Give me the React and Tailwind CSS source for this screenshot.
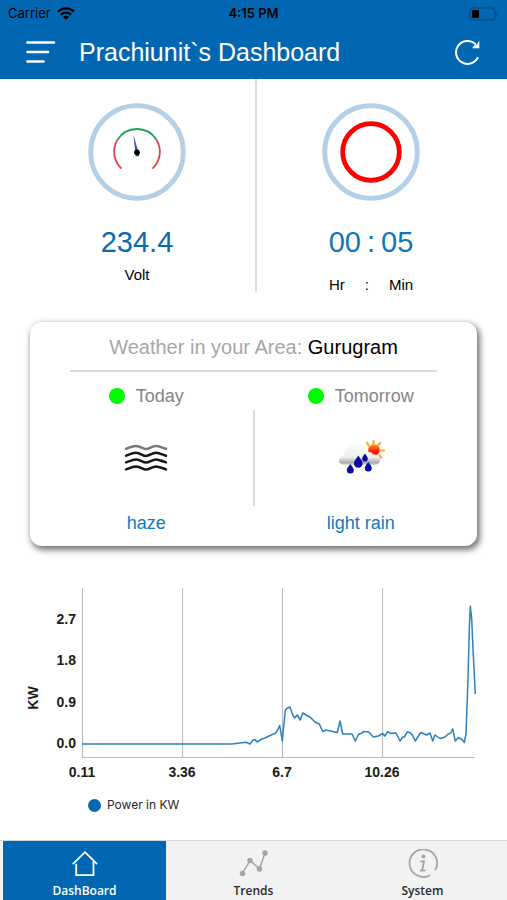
import { useState } from 'react';
import clsx from 'clsx';

// [x, y] inside the chart's own viewBox
const POWER_POINTS = [
  [82, 165], [232, 165], [240, 164], [246, 163.3], [250, 165], [253, 161], [255, 160.5], [257, 163], [262, 160], [265, 159],
  [270, 156.5], [275, 154.5], [277.7, 151], [279.7, 146.5], [282.3, 162], [285.3, 131], [287.3, 129], [290, 128],
  [292.7, 136], [294.7, 139], [297.3, 136], [300.3, 141], [302.7, 134], [306.7, 136.5], [310, 138], [315, 143],
  [319.3, 145], [322.7, 152.5], [326, 151], [337.3, 153.5], [340, 142], [342.7, 155], [352, 155], [355.3, 162],
  [358.3, 155.5], [361.7, 154], [364, 152.5], [368.7, 153], [373.3, 158], [378.3, 157], [382.7, 154.5],
  [384.7, 157], [387.7, 152.7], [390.7, 154.5], [396, 154], [400, 162], [402.7, 158], [404.3, 158], [407.3, 153],
  [410, 153.5], [412.7, 156.5], [415.3, 162], [420.7, 153.5], [426.7, 156], [430, 154], [432.7, 162], [435, 156],
  [440, 159.5], [445, 158], [448.3, 155], [450.7, 154], [452.7, 150], [455.3, 162], [458.3, 158.5], [462, 160.5],
  [464.3, 163.5], [466, 155], [468, 100], [469.3, 50], [470.3, 27], [471.7, 40], [473, 70], [474, 90], [475.3, 115],
];

const X_TICKS = [
  { x: 82, label: '0.11' },
  { x: 182, label: '3.36' },
  { x: 282, label: '6.7' },
  { x: 382, label: '10.26' },
];

const Y_TICKS = [
  { y: 40, label: '2.7' },
  { y: 81, label: '1.8' },
  { y: 123, label: '0.9' },
  { y: 164, label: '0.0' },
];

const WifiIcon = () => (
  <svg viewBox="0 0 18 13" className="w-[18px] h-[13px]" aria-hidden="true">
    <path d="M1 4.6a11.4 11.4 0 0 1 16 0" fill="none" stroke="#000" strokeWidth="2.3" />
    <path d="M3.9 7.7a7.3 7.3 0 0 1 10.2 0" fill="none" stroke="#000" strokeWidth="2.2" />
    <path d="M9 12.8 6 9.9a4.2 4.2 0 0 1 6 0z" />
  </svg>
);

const BatteryIcon = () => (
  <svg viewBox="0 0 30 14" className="w-[30px] h-[14px]" aria-hidden="true">
    <rect x="1" y="1" width="25" height="12" rx="3" fill="none" stroke="#0b4676" strokeWidth="1.2" />
    <rect x="3" y="3" width="7" height="8" rx="1" />
    <path d="M27.5 4.6c2 .8 2 4 0 4.8z" fill="#0b4676" />
  </svg>
);

const MenuIcon = () => (
  <svg viewBox="0 0 30 24" className="w-[30px] h-6" fill="none" stroke="#fff" strokeWidth="2.6" strokeLinecap="round" aria-hidden="true">
    <path d="M1.5 1.5h26.5M1.5 11h20.5M1.5 20.500h16" />
  </svg>
);

const RefreshIcon = () => (
  <svg viewBox="0 0 26 26" className="w-[26px] h-[26px]" fill="none" stroke="#fff" strokeWidth="2" aria-hidden="true">
    <path d="M23 17.200A11.500 11.500 0 1 1 20.800 4.400" />
    <path d="M24 1.500v6.500h-6.300l1.500-2.500 3 -.5z" fill="#fff" strokeWidth="0.6" />
  </svg>
);

const VoltGauge = () => (
  <svg viewBox="0 0 98 98" className="w-[98px] h-[98px]" fill="none" aria-hidden="true">
    <circle cx="49" cy="49" r="46.3" stroke="#b3d0e6" strokeWidth="4.8" />
    <path d="M33.5 65.6A23 23 0 0 1 29.5 36.8" stroke="#e0444a" strokeWidth="1.8" />
    <path d="M29.5 36.8A23 23 0 0 1 68.5 36.8" stroke="#17a554" strokeWidth="1.8" />
    <path d="M68.5 36.8A23 23 0 0 1 64.5 65.6" stroke="#e0444a" strokeWidth="1.8" />
    <path d="M45.4 31.5 51.5 53 47.8 53.5z" fill="#2f55b5" />
    <circle cx="49" cy="49.3" r="2.9" fill="#000" />
  </svg>
);

const TimerRing = () => (
  <svg viewBox="0 0 98 98" className="w-[98px] h-[98px]" fill="none" aria-hidden="true">
    <circle cx="49" cy="49" r="46.3" stroke="#b3d0e6" strokeWidth="4.8" />
    <circle cx="49" cy="49" r="28.3" stroke="#fe0000" strokeWidth="4.8" />
  </svg>
);

const HazeIcon = () => (
  <svg viewBox="0 0 44 28" className="w-11 h-7" fill="none" stroke="#161616" strokeWidth="2.5" strokeLinecap="round" aria-hidden="true">
    <path d="M2 4.8C6 3.2 9 2 12 2c4.500 0 6.500 3 10 3s6-3 10-3c3.500 0 6 1.600 10 2.800" stroke="#777" />
    <path d="M2 11.800C6 10.200 9 8.800 12 8.800c4.500 0 6.500 3.200 10 3.200s6-3.200 10-3.200c3.500 0 6 1.800 10 3" />
    <path d="M2 18.400C6 16.800 9 15.400 12 15.400c4.500 0 6.500 3.200 10 3.200s6-3.200 10-3.200c3.500 0 6 1.800 10 3" />
    <path d="M2 25.400C6 23.800 9 22.400 12 22.400c4.500 0 6.500 3.200 10 3.200s6-3.200 10-3.200c3.500 0 6 1.800 10 3" />
  </svg>
);

const RainIcon = () => (
  <svg viewBox="0 0 48 36" className="w-12 h-9" aria-hidden="true">
    <defs>
      <linearGradient id="cloud" x1="0" y1="0" x2="0" y2="1">
        <stop offset="0" stopColor="#fcfcfc" />
        <stop offset="0.65" stopColor="#efefef" />
        <stop offset="0.9" stopColor="#a9a9a9" />
        <stop offset="1" stopColor="#e4e4e4" />
      </linearGradient>
      <linearGradient id="sun" x1="0" y1="0" x2="0" y2="1">
        <stop offset="0" stopColor="#ff9a1a" />
        <stop offset="0.6" stopColor="#fb1b10" />
      </linearGradient>
    </defs>
    <path
      d="M36.500 1v3M30 3l1.800 2.500M43 3l-1.800 2.500M44 10.500h3M42.500 15.500l1.500 2"
      stroke="#ffac2e" strokeWidth="2.2" strokeLinecap="round"
    />
    <circle cx="37" cy="10" r="5.800" fill="url(#sun)" />
    <path d="M6 25c-6-2-5-8 .5-9.500 1-7 5-12.500 13-12.500 6 0 9.500 3.500 10.500 9.500 2-1 5-.5 6 2 8 0 10 8.500 3 10.500z" fill="url(#cloud)" />
    <g fill="#0a0a9e">
      <path d="M21.300 15.500c1.500 3 4.300 4.800 4.300 7.900a4.300 4.300 0 0 1-8.600 0c0-3.100 2.800-4.900 4.300-7.900z" />
      <path d="M28 13.500c1 2 2.800 3.200 2.800 5.200a2.800 2.800 0 0 1-5.600 0c0-2 1.800-3.200 2.800-5.200z" />
      <path d="M13.300 24c1.200 2.200 3.500 3.600 3.500 6.100a3.500 3.500 0 0 1-7 0c0-2.500 2.300-3.900 3.500-6.100z" />
      <path d="M31.300 22c1.200 2.200 3.500 3.600 3.500 6.100a3.500 3.500 0 0 1-7 0c0-2.500 2.300-3.900 3.500-6.100z" />
    </g>
  </svg>
);

const HomeIcon = () => (
  <svg viewBox="0 0 30 30" className="w-[30px] h-[30px]" fill="none" stroke="#fff" strokeWidth="1.8" aria-hidden="true">
    <path d="M2.800 15.200 15 3.200 27.200 15.200M6.200 14.800V26.200H23.500V12" />
  </svg>
);

const TrendsIcon = () => (
  <svg viewBox="0 0 30 30" className="w-[30px] h-[30px]" stroke="#a5a5a5" strokeWidth="1.500" fill="none" aria-hidden="true">
    <path d="M3.500 24.500 11 11.500 20.500 20 26 4" />
    <g fill="#a5a5a5">
      <circle cx="3.500" cy="24.500" r="2" />
      <circle cx="11" cy="11.500" r="2" />
      <circle cx="20.500" cy="20" r="2" />
      <circle cx="26" cy="4" r="2" />
    </g>
  </svg>
);

const InfoIcon = () => (
  <svg viewBox="0 0 30 30" className="w-[30px] h-[30px]" stroke="#a5a5a5" strokeWidth="1.800" fill="none" aria-hidden="true">
    <path d="M22 26.200A13.800 13.800 0 1 1 27.300 21" />
    <path d="M12.500 12.500h3.500l-1.800 8.500M12 21.500h5.500" />
    <circle cx="15.500" cy="7.500" r="1.200" fill="#a5a5a5" />
  </svg>
);

const TABS = [
  { id: 'dashboard', label: 'DashBoard', icon: HomeIcon },
  { id: 'trends', label: 'Trends', icon: TrendsIcon },
  { id: 'system', label: 'System', icon: InfoIcon },
];

const Forecast = ({ day, icon, text }) => (
  <div className="flex-1 flex flex-col items-center pt-3">
    <div className="flex items-center gap-[11px] text-[18px] leading-6 text-[#858585]">
      <span className="w-4 h-4 rounded-full bg-[#00fa00]" />
      {day}
    </div>
    <div className="h-[60px] mt-5 flex items-center">{icon}</div>
    <p className="mt-[23px] text-[18px] leading-6 text-[#0f7abc]">{text}</p>
  </div>
);

const PowerChart = () => (
  <figure className="mt-[33px]">
    <svg viewBox="0 0 507 205" className="w-full" role="img" aria-label="Power in KW">
      <g stroke="#bdbdbd" strokeWidth="1.200">
        {X_TICKS.map((t) => (
          <line key={t.x} x1={t.x + 0.5} x2={t.x + 0.5} y1="9" y2="179" />
        ))}
        <line x1="82" x2="475" y1="178.500" y2="178.500" />
      </g>
      <polyline
        points={POWER_POINTS.map((p) => p.join(',')).join(' ')}
        fill="none" stroke="#2b80bd" strokeWidth="1.500" strokeLinejoin="round"
      />
      <g className="font-['Liberation_Sans'] text-[14px] font-bold" fill="#1c1c1c">
        {Y_TICKS.map((t) => (
          <text key={t.label} x="76" y={t.y + 5} textAnchor="end">{t.label}</text>
        ))}
        {X_TICKS.map((t) => (
          <text key={t.label} x={t.x} y="198" textAnchor="middle">{t.label}</text>
        ))}
        <text transform="translate(38 119) rotate(-90)" textAnchor="middle">KW</text>
      </g>
    </svg>
    <figcaption className="mt-[11px] pl-[88px] flex items-center gap-1.5 font-['Inter'] text-xs leading-5 text-[#262626]">
      <span className="w-[13px] h-[13px] rounded-full bg-[#0568b2]" />
      Power in KW
    </figcaption>
  </figure>
);

const App = () => {
  const [activeTab, setActiveTab] = useState('dashboard');

  return (
    <div className="min-h-screen flex flex-col bg-white font-['Liberation_Sans',sans-serif] text-black">
      <header className="bg-[#0267b3]">
        <div className="h-[27px] px-2 grid grid-cols-3 items-center font-['Inter'] text-[13px]">
          <div className="flex items-center gap-1.5">
            Carrier <WifiIcon />
          </div>
          <span className="text-center font-semibold">4:15 PM</span>
          <div className="flex justify-end"><BatteryIcon /></div>
        </div>
        <div className="h-[52px] px-[26px] flex items-center gap-[23px]">
          <button type="button" aria-label="Menu"><MenuIcon /></button>
          <h1 className="flex-1 text-[25px] text-white">Prachiunit`s Dashboard</h1>
          <button type="button" aria-label="Refresh"><RefreshIcon /></button>
        </div>
      </header>

      <main className="flex-1">
        {/* Readings */}
        <section className="grid grid-cols-[1fr_2px_1fr] items-start pl-[5px]">
          <div className="pl-3.5 pt-6 flex flex-col items-center">
            <VoltGauge />
            <p className="mt-6 text-[29px] leading-[34px] text-[#0c68af]">234.4</p>
            <p className="mt-1.5 text-[15px] leading-5">Volt</p>
          </div>
          <div className="h-[213px] bg-[#dcdcdc]" />
          <div className="pr-[22px] pt-6 flex flex-col items-center">
            <TimerRing />
            <p className="mt-6 flex gap-1.5 text-[29px] leading-[34px] text-[#0f76b9]">
              <span>00</span><span>:</span><span>05</span>
            </p>
            <p className="mt-4 flex gap-5 text-[15px] leading-5">
              <span>Hr</span><span>:</span><span>Min</span>
            </p>
          </div>
        </section>

        {/* Weather */}
        <section className="mx-[30px] mt-[27px] pt-[13px] pb-[11px] rounded-xl bg-white shadow-[2px_3px_6px_1px_rgba(0,0,0,0.55)]">
          <h2 className="text-center text-[20px] leading-6 text-[#a6a6a6]">
            Weather in your Area: <span className="text-black">Gurugram</span>
          </h2>
          <hr className="mx-10 mt-[11px] border-0 h-0.5 bg-[#d9d9d9]" />
          <div className="flex px-2.5">
            <Forecast day="Today" icon={<HazeIcon />} text="haze" />
            <div className="mt-[38px] w-0.5 h-24 bg-[#dcdcdc]" />
            <Forecast day="Tomorrow" icon={<RainIcon />} text="light rain" />
          </div>
        </section>

        <PowerChart />
      </main>

      <nav className="h-[60px] grid grid-cols-3 bg-[#f2f2f2] border-t border-[#d6d6d6] font-['Open_Sans']">
        {TABS.map(({ id, label, icon: Icon }) => (
          <button
            key={id}
            type="button"
            onClick={() => setActiveTab(id)}
            className={clsx(
              'mx-[3px] pt-2 flex flex-col items-center gap-1 text-xs font-semibold',
              activeTab === id ? 'bg-[#0267b3] text-white' : 'text-[#2a2a2a]'
            )}
          >
            <Icon />
            {label}
          </button>
        ))}
      </nav>
    </div>
  );
};

export default App;
